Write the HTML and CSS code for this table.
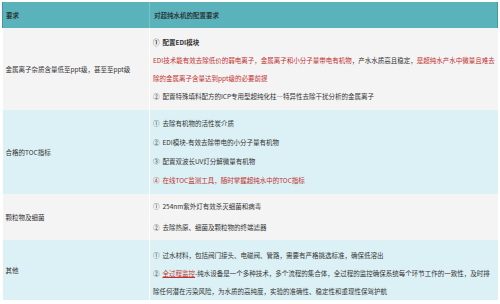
FILE: index.html
```html
<!DOCTYPE html>
<html lang="zh">
<head>
<meta charset="utf-8">
<link rel="stylesheet" href="styles.css">
</head>
<body>
<table class="spec">
  <colgroup><col class="c1"><col class="c2"></colgroup>
  <thead>
    <tr class="head"><th>要求</th><th>对超纯水机的配置要求</th></tr>
  </thead>
  <tbody>
    <tr class="row gray r1">
      <td class="req">金属离子杂质含量低至ppt级，甚至至ppt级</td>
      <td class="cfg">
        <p class="b"><span class="num">①</span> 配置EDI模块</p>
        <p><span class="red">EDI技术能有效去除低价的弱电离子，金属离子和小分子量带电有机物</span>，产水水质高且稳定，<span class="red">是超纯水产水中微量且难去除的金属离子含量达到ppt级的必要前提</span></p>
        <p><span class="num">②</span> 配置特殊填料配方的ICP专用型超纯化柱—特异性去除干扰分析的金属离子</p>
      </td>
    </tr>
    <tr class="row blue r2">
      <td class="req">合格的TOC指标</td>
      <td class="cfg">
        <p><span class="num">①</span> 去除有机物的活性炭介质</p>
        <p><span class="num">②</span> EDI模块-有效去除带电的小分子量有机物</p>
        <p><span class="num">③</span> 配置双波长UV灯分解微量有机物</p>
        <p class="red"><span class="num">④</span> 在线TOC监测工具，随时掌握超纯水中的TOC指标</p>
      </td>
    </tr>
    <tr class="row gray r3">
      <td class="req">颗粒物及细菌</td>
      <td class="cfg">
        <p><span class="num">①</span> 254nm紫外灯有效杀灭细菌和病毒</p>
        <p><span class="num">②</span> 去除热原、细菌及颗粒物的终端滤器</p>
      </td>
    </tr>
    <tr class="row blue r4">
      <td class="req">其他</td>
      <td class="cfg">
        <p><span class="num">①</span> 过水材料，包括阀门接头、电磁阀、管路，需要有严格挑选标准，确保低溶出</p>
        <p><span class="num">②</span> <span class="red link">全过程监控</span>-纯水设备是一个多种技术，多个流程的集合体，全过程的监控确保系统每个环节工作的一致性，及时排除任何潜在污染风险，为水质的高纯度，实验的准确性、稳定性和重现性保驾护航</p>
      </td>
    </tr>
  </tbody>
</table>
</body>
</html>
```

FILE: styles.css
```css
html, body {
  margin: 0;
  padding: 0;
  background: #ffffff;
}
body {
  padding: 2px 3px 0 2px;
  font-family: "Noto Sans CJK SC", "Noto Sans", sans-serif;
  font-size: 6.5px;
  color: #333333;
}
.spec {
  width: 495px;
  border-collapse: collapse;
  table-layout: fixed;
}
.c1 { width: 147px; }
.c2 { width: 348px; }
.head th {
  height: 26px;
  padding: 0 4px;
  text-align: left;
  font-weight: bold;
  color: #2a3a3c;
  background: #5ab2ba;
  border-left: 1px solid #7cc3c9;
  box-sizing: border-box;
}
.head th:first-child { border-left: 1px solid #3f9aa3; padding-left: 3px; }
.head th:last-child { border-right: 1px solid #3f9aa3; }
.row td {
  border-left: 1px solid #ffffff;
  vertical-align: middle;
  box-sizing: border-box;
}
.row td:first-child { border-left: none; }
.gray td { background: #f4f4f4; }
.blue td { background: #dcf1f5; }
.req { padding: 0 3px 0 3px; }
.cfg { padding: 5px 1px 5px 3px; }
.cfg p { margin: 0; line-height: 18px; }
.num { display: inline-block; margin-right: 1.5px; }
.b { font-weight: bold; }
.red { color: #c0302e; }
.link { text-decoration: underline; }
.r1 { height: 82px; }
.r2 { height: 84px; }
.r2 .cfg { padding: 4px 1px 4px 3px; }
.r2 .cfg p { line-height: 19px; }
.r3 { height: 46px; }
.r3 .cfg { padding: 2px 1px 2px 3px; }
.r3 .cfg p { line-height: 21px; }
.r4 { height: 60px; }
.r4 .cfg { padding: 6px 3px 0 3px; }
```
